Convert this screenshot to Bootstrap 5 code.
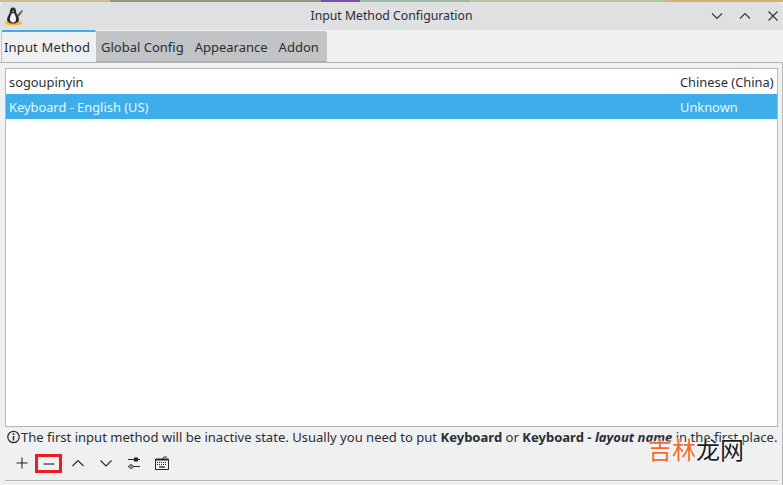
<!DOCTYPE html>
<html lang="en">

<head>
    <meta charset="UTF-8">
    <title>Input Method Configuration</title>
    <link href="https://cdn.jsdelivr.net/npm/bootstrap@5.3.3/dist/css/bootstrap.min.css" rel="stylesheet" crossorigin="anonymous">
    <script src="https://cdn.jsdelivr.net/npm/bootstrap@5.3.3/dist/js/bootstrap.bundle.min.js" crossorigin="anonymous"></script>
    <style>
        html, body { width: 783px; height: 485px; overflow: hidden; }
        body { background: #eff0f1; color: #2a2e32; font-family: "Noto Sans", sans-serif; font-size: 13px; line-height: 18px; }
        .wall { height: 2px; background: linear-gradient(90deg, #c9c08e 0 14%, #8d9a7c 14% 41%, #7a4fa8 41% 46%, #9db9a8 46% 60%, #b9c3a2 60% 85%, #d3b27a 85% 100%); }
        .titlebar { height: 28px; background: #dee0e2; border-radius: 5px 5px 0 0; }
        .titlebar .win-title { left: 0; right: 0; top: 0; bottom: 1px; font-size: 12.25px; }
        .tabrow { height: 32px; padding-left: 1px; }
        .tabitem { height: 32px; white-space: nowrap; }
        .tab-on { width: 95px; background: #eff0f1; border-top: 2px solid #3daee9; border-left: 1px solid #c2c3c5; padding: 6px 0 0 2px; border-radius: 2px 2px 0 0; letter-spacing: .16px; }
        .tab-group { width: 231px; margin-top: 1px; height: 31px; background: #c2c3c5; border-radius: 0 3px 0 0; border-bottom: 1px solid #a9abad; padding-left: 5px; gap: 11px; padding-top: 7px; }
        .tab-group span { white-space: nowrap; }
        .panel { border-top: 1px solid #b4b6b8; border-right: 1px solid #b4b6b8; height: 423px; padding: 5px 4px 0 5px; }
        .imlist { height: 359px; background: #fff; border: 1px solid #b4b6b8; }
        .imrow { height: 25px; padding: 4px 2px 0 3px; font-size: 12.85px; }
        .imrow-on { background: #3daee9; color: #e8f5fc; }
        .lang { width: 95px; white-space: nowrap; }
        .hint { margin: 1px 0 0 2px; height: 18px; white-space: nowrap; font-size: 13.05px; }
        .hint svg { flex: none; }
        .toolbar { height: 24px; margin-top: 5px; padding-left: 3px; }
        .toolbtn { width: 28px; height: 20px; }
        .toolbtn-hit { width: 27px; height: 19px; margin: 0 2px 0 -1px; padding: 1px 0 0 1px; outline: 3px solid #ed1c24; outline-offset: -3px; }
        .footline { border-top: 1px solid #b4b6b8; margin: 5px 0 0 0; }
        .mark-wm { right: 39px; top: 433px; font-family: "Noto Sans CJK SC", sans-serif; font-size: 24px; line-height: 32px; white-space: nowrap; text-shadow: 0 0 2px #fff, 0 0 2px #fff, 0 0 2px #fff; }
        .wm-a { color: #f46a2c; }
        .wm-b { color: #1c1c1c; }
    </style>
</head>

<body class="position-relative">
    <div class="wall"></div>
    <div class="titlebar position-relative d-flex align-items-center justify-content-between">
        <div class="win-title position-absolute d-flex align-items-center justify-content-center">Input Method Configuration</div>
        <svg class="ms-1 position-relative" width="20" height="20" viewBox="0 0 20 20">
            <ellipse cx="9.500" cy="17" rx="8.500" ry="2.600" fill="#f2b92e"/>
            <path d="M9 1.500c-2.400 0-3 2-3 4 0 2-3 5-3 8 0 2 2 4 6 4s6-2 6-4c0-3-3-6-3-8 0-2-.6-4-3-4z" fill="#2b2b2b"/>
            <path d="M9 7c-1.800 0-3 3.500-3 6.500 0 2 1.300 3 3 3s3-1 3-3C12 10.500 10.800 7 9 7z" fill="#f4f4f4"/>
            <path d="M7.800 4.800h2.500L9.100 6.400z" fill="#f2b92e"/>
            <path d="M13 9l5-5 1 1-4.500 6z" fill="#6a5c48"/>
        </svg>
        <div class="d-flex align-items-center position-relative me-1 gap-3">
            <svg width="12" height="12" viewBox="0 0 12 12" fill="none" stroke="#31363b" stroke-width="1.100"><path d="M1 3.500l5 5 5-5"/></svg>
            <svg width="12" height="12" viewBox="0 0 12 12" fill="none" stroke="#31363b" stroke-width="1.100"><path d="M1 8.500l5-5 5 5"/></svg>
            <svg width="12" height="12" viewBox="0 0 12 12" fill="none" stroke="#31363b" stroke-width="1.100"><path d="M1.500 1.500l9 9M10.500 1.500l-9 9"/></svg>
        </div>
    </div>

    <div class="tabrow d-flex">
        <div class="tabitem tab-on">Input Method</div>
        <div class="tab-group d-flex"><span>Global Config</span><span>Appearance</span><span>Addon</span></div>
    </div>

    <div class="panel">
        <div class="imlist">
            <div class="imrow d-flex justify-content-between">
                <span>sogoupinyin</span><span class="lang">Chinese (China)</span>
            </div>
            <div class="imrow imrow-on d-flex justify-content-between">
                <span>Keyboard - English (US)</span><span class="lang">Unknown</span>
            </div>
        </div>
        <div class="hint d-flex align-items-center">
            <svg width="14" height="14" viewBox="0 0 14 14" fill="none" stroke="#2a2e32" stroke-width="1.200"><circle cx="6.500" cy="7" r="5.700"/><path d="M6.500 6v4.500M6.500 3.300v1.700" stroke-width="1.500"/></svg>
            <span>The first input method will be inactive state. Usually you need to put <b>Keyboard</b> or <b>Keyboard - <i>layout name</i></b> in the first place.</span>
        </div>
        <div class="toolbar d-flex align-items-center">
            <div class="toolbtn d-flex align-items-center justify-content-center">
                <svg width="14" height="14" viewBox="0 0 14 14" stroke="#232629" stroke-width="1.100"><path d="M1.500 7h11M7 1.500v11"/></svg>
            </div>
            <div class="toolbtn toolbtn-hit d-flex align-items-center justify-content-center">
                <svg width="14" height="14" viewBox="0 0 14 14" stroke="#232629" stroke-width="1.100"><path d="M1.500 7h11"/></svg>
            </div>
            <div class="toolbtn d-flex align-items-center justify-content-center">
                <svg width="14" height="14" viewBox="0 0 14 14" fill="none" stroke="#232629" stroke-width="1.100"><path d="M1.500 10l5.500-5.500 5.500 5.500"/></svg>
            </div>
            <div class="toolbtn d-flex align-items-center justify-content-center">
                <svg width="14" height="14" viewBox="0 0 14 14" fill="none" stroke="#232629" stroke-width="1.100"><path d="M1.500 4.500l5.500 5.500 5.500-5.500"/></svg>
            </div>
            <div class="toolbtn d-flex align-items-center justify-content-center">
                <svg width="14" height="14" viewBox="0 0 14 14" fill="#232629" stroke="#232629"><path d="M1 3.500h12M1 10.500h12" stroke-width="1.200"/><rect x="7" y="1.500" width="4" height="4" stroke="none"/><circle cx="4" cy="10.500" r="2" fill="#9a9c9e" stroke="#555" stroke-width="1"/></svg>
            </div>
            <div class="toolbtn d-flex align-items-center justify-content-center">
                <svg width="16" height="16" viewBox="0 0 16 16" fill="none" stroke="#232629"><path d="M1.500 4.500h13v10h-13zM9 4.500V3q0-1 1.500-1H13"/><path d="M1.500 4.500h13" stroke-width="2"/><path d="M3 7.500h10M3 9.500h10" stroke-dasharray="1 1"/><path d="M5 12h6" stroke-width="1.300"/></svg>
            </div>
        </div>
        <div class="footline"></div>
    </div>

    <div class="mark-wm position-absolute"><span class="wm-a">吉林</span><span class="wm-b">龙网</span></div>
</body>

</html>
